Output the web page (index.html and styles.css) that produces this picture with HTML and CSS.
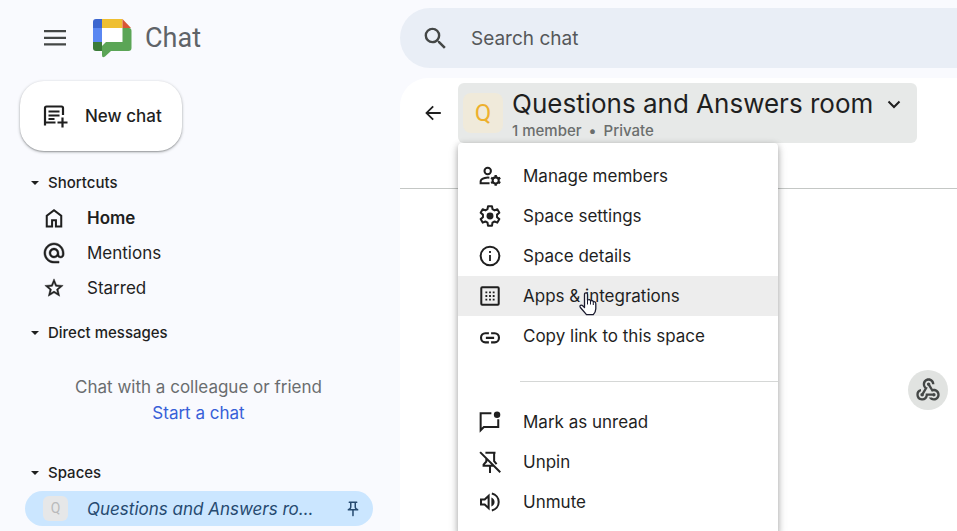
FILE: index.html
```html
<!DOCTYPE html>
<html lang="en">
<head>
<meta charset="utf-8">
<meta name="viewport" content="width=device-width, initial-scale=1">
<title>Chat</title>
<link rel="stylesheet" href="styles.css">
</head>
<body>
<div class="app">
  <aside class="sidebar">
    <header class="brand">
      <button class="icon-button" type="button" aria-label="Main menu">
        <svg class="icon icon-large" viewBox="0 0 24 24"><path d="M1 4h22v2.300H1zM1 10.800h22v2.300H1zM1 17.300h22v2.300H1z"/></svg>
      </button>
      <svg class="logo" viewBox="0 0 39 39" aria-hidden="true">
        <path fill="#fff" d="M9 9h21v14H9z"/>
        <path fill="#3c66cf" d="M3 0h6v9H0V3q0-3 3-3z"/>
        <path fill="#efbf31" d="M9 0h20.500v9H9z"/>
        <path fill="#d85636" d="M29.500 0l8.500 9h-8.500z"/>
        <path fill="#5a87f2" d="M0 9h9v14H0z"/>
        <path fill="#3b7b38" d="M0 23h9v9H3q-3 0-3-3z"/>
        <path fill="#5ba556" d="M29.500 9H36q2.500 0 2.500 3v17q0 3-3 3H18l-6 5.500q-3 2-3-1.500v-9l4-4h16.500z"/>
      </svg>
      <span class="brand-name">Chat</span>
    </header>

    <button class="new-chat" type="button">
      <svg class="icon icon-large" viewBox="0 0 24 24"><path fill="none" stroke="currentColor" stroke-width="2.200" d="M2 21.500V4q0-1.500 1.500-1.500h15Q20 2.500 20 4v7M2 18.500h10.500M5.500 7.500h11M5.500 11.500h11M5.500 15h6M19.500 13.500v10M14.500 18.500h10"/></svg>
      <span>New chat</span>
    </button>

    <nav class="nav">
      <button class="section" type="button"><span class="caret"></span>Shortcuts</button>
      <a class="nav-item current" href="#home">
        <svg class="icon" viewBox="0 0 24 24"><path d="M5.200 20.200h3.600v-6.800h6.400v6.800h3.600v-10L12 5l-6.800 5.200zM3 22.400V9.100L12 2.200l9 6.900v13.300h-8v-6.800h-2v6.800z"/></svg>
        <span>Home</span>
      </a>
      <a class="nav-item" href="#mentions">
        <svg class="icon" viewBox="0 0 24 24"><path stroke="currentColor" stroke-width=".5" d="M12 1c-6.100 0-11 4.900-11 11s4.900 11 11 11h5.500v-2H12c-4.900 0-9-4.100-9-9s4.100-9 9-9 9 4.100 9 9v1.500c0 1-.8 2-1.800 2s-1.800-1-1.800-2V12c0-3-2.400-5.400-5.400-5.400S6.600 9 6.600 12s2.400 5.400 5.400 5.400c1.500 0 2.900-.6 3.900-1.600.7 1 2 1.600 3.300 1.600 2.100 0 3.800-1.700 3.800-3.900V12c0-6.100-4.900-11-11-11zm0 14.400c-1.900 0-3.400-1.500-3.400-3.400s1.500-3.400 3.400-3.400 3.400 1.500 3.400 3.400-1.500 3.400-3.400 3.400z"/></svg>
        <span>Mentions</span>
      </a>
      <a class="nav-item" href="#starred">
        <svg class="icon" viewBox="0 0 24 24"><path stroke="currentColor" stroke-width=".5" d="M22 9.240l-7.190-.62L12 2 9.190 8.630 2 9.240l5.460 4.730L5.820 21 12 17.270 18.180 21l-1.630-7.030L22 9.240zM12 15.400l-3.760 2.270 1-4.280-3.320-2.880 4.380-.38L12 6.100l1.710 4.040 4.380.38-3.320 2.880 1 4.280L12 15.400z"/></svg>
        <span>Starred</span>
      </a>
    </nav>

    <section class="nav">
      <button class="section" type="button"><span class="caret"></span>Direct messages</button>
      <div class="empty">
        <p>Chat with a colleague or friend</p>
        <a href="#start">Start a chat</a>
      </div>
    </section>

    <section class="nav">
      <button class="section" type="button"><span class="caret"></span>Spaces</button>
      <a class="room" href="#room">
        <span class="room-avatar">Q</span>
        <span class="room-name">Questions and Answers room</span>
        <svg class="icon icon-small" viewBox="0 0 24 24"><path d="M14 4v5c0 1.120.37 2.160 1 3H9c.65-.86 1-1.900 1-3V4h4m3-2H7c-.55 0-1 .45-1 1s.45 1 1 1h1v5c0 1.660-1.340 3-3 3v2h5.970v7l1 1 1-1v-7H19v-2c-1.660 0-3-1.340-3-3V4h1c.55 0 1-.45 1-1s-.45-1-1-1z"/></svg>
      </a>
    </section>
  </aside>

  <main class="main">
    <label class="search">
      <svg class="icon search-icon" viewBox="0 0 24 24" aria-hidden="true"><path d="M15.500 14h-.79l-.28-.27A6.471 6.471 0 0 0 16 9.500 6.500 6.500 0 1 0 9.500 16c1.610 0 3.090-.59 4.230-1.570l.27.28v.79l5 4.990L20.490 19l-4.990-5zm-6 0C7.010 14 5 11.990 5 9.500S7.010 5 9.500 5 14 7.010 14 9.500 11.990 14 9.500 14z"/></svg>
      <input type="search" placeholder="Search chat" aria-label="Search chat">
    </label>

    <section class="panel">
      <header class="panel-header">
        <button class="icon-button back" type="button" aria-label="Back">
          <svg class="icon" viewBox="0 0 24 24"><path d="M20.500 11H7.300l5.600-5.590L11.500 4l-8 8 8 8 1.410-1.410L7.300 13h13.200v-2z"/></svg>
        </button>
        <div class="room-head">
          <button class="room-title" type="button" aria-haspopup="menu" aria-expanded="true">
            <span class="avatar">Q</span>
            <span class="title-text">
              <span class="title">Questions and Answers room
                <svg class="chevron" viewBox="0 0 14 9"><path fill="none" stroke="currentColor" stroke-width="2" d="M1.500 1.500L7 7l5.500-5.500"/></svg>
              </span>
              <span class="meta"><span>1 member</span><span>•</span><span>Private</span></span>
            </span>
          </button>

          <div class="menu" role="menu">
            <button class="menu-item" type="button" role="menuitem">
              <svg class="icon" viewBox="0 0 24 24"><g fill="none" stroke="currentColor" stroke-width="2.200"><circle cx="9.500" cy="6.500" r="3.500"/><path d="M11.500 20H1.800v-2.200q0-2.600 4.500-3.700 2.200-.5 5-.3"/><circle cx="18.200" cy="16.800" r="3.300"/></g><path fill="none" stroke="currentColor" stroke-width="2.600" d="M18.200 11v2.500M18.200 20.100v2.500M13.200 13.900l2.100 1.200M21.100 18.500l2.100 1.200M13.200 19.700l2.100-1.200M21.100 15.100l2.100-1.200"/></svg>
              <span>Manage members</span>
            </button>
            <button class="menu-item" type="button" role="menuitem">
              <svg class="icon" viewBox="0 0 24 24"><path fill="none" stroke="currentColor" stroke-width="2.200" stroke-linejoin="round" d="M9.800 1.400h4.400l.5 3.200 2.300 1.300 3-1.200 2.200 3.800-2.500 2v2.900l2.500 2-2.200 3.800-3-1.200-2.300 1.300-.5 3.300H9.800l-.5-3.300L7 18l-3 1.200-2.200-3.800 2.500-2v-2.900l-2.500-2L4 4.700l3 1.200 2.300-1.300z"/><circle cx="12" cy="12" r="3.800"/></svg>
              <span>Space settings</span>
            </button>
            <button class="menu-item" type="button" role="menuitem">
              <svg class="icon" viewBox="0 0 24 24"><circle cx="12" cy="12" r="10.200" fill="none" stroke="currentColor" stroke-width="2.200"/><path d="M11 6.500h2v2.200h-2zM11 10.800h2v6.700h-2z"/></svg>
              <span>Space details</span>
            </button>
            <button class="menu-item active" type="button" role="menuitem">
              <svg class="icon" viewBox="0 0 24 24"><rect x="2.500" y="2.500" width="19" height="19" rx="1" fill="none" stroke="currentColor" stroke-width="2.200"/><path d="M7 7h2v2H7zM11 7h2v2h-2zM15 7h2v2h-2zM7 11h2v2H7zM11 11h2v2h-2zM15 11h2v2h-2zM7 15h2v2H7zM11 15h2v2h-2zM15 15h2v2h-2z"/></svg>
              <span>Apps &amp; integrations</span>
              <svg class="pointer" viewBox="0 0 18 24" aria-hidden="true"><path fill="#fff" stroke="#1b1b2f" stroke-width="1.300" stroke-linejoin="round" d="M5.500 13V2.500q0-1.700 1.500-1.700t1.500 1.700V8q2.500-1 3 .8 2.300-.8 2.800.9 2.500-.4 2.500 2v5q0 3-2.500 6H7.500L1.400 15.500q-1-1.500.2-2.200 1.200-.6 2.400.7l1.500 1.500z"/><path fill="none" stroke="#1b1b2f" d="M8.500 8v4.500M11.500 9v3.500M14.300 10v3"/></svg>
            </button>
            <button class="menu-item" type="button" role="menuitem">
              <svg class="icon" viewBox="0 0 24 24"><path fill="none" stroke="currentColor" stroke-width="2.300" d="M10.800 9H6.900C4.200 9 2.200 11.100 2.200 14s2 5 4.700 5h3.900M13.200 9h3.900c2.700 0 4.700 2.100 4.700 5s-2 5-4.700 5h-3.900M7.500 14h9"/></svg>
              <span>Copy link to this space</span>
            </button>
            <hr class="menu-divider">
            <button class="menu-item" type="button" role="menuitem">
              <svg class="icon" viewBox="0 0 24 24"><path fill="none" stroke="currentColor" stroke-width="2.200" d="M13.500 2.500H1.800V21L5.300 17.500H21V9"/><circle cx="19.700" cy="4" r="3.500"/></svg>
              <span>Mark as unread</span>
            </button>
            <button class="menu-item" type="button" role="menuitem">
              <svg class="icon" viewBox="0 0 24 24"><path fill="none" stroke="currentColor" stroke-width="2.200" d="M1.200 1.200l22 22M7 1.800h11M16.500 2v9l2.700 3.300M8 8.500v3L5 14.800V16h10.500M12 16v8"/></svg>
              <span>Unpin</span>
            </button>
            <button class="menu-item" type="button" role="menuitem">
              <svg class="icon" viewBox="0 0 24 24"><path fill="none" stroke="currentColor" stroke-width="2.200" d="M2.200 9.300v5.400h4l4.300 4V5.300l-4.300 4zM14 2.800c4.500 1 7.500 4.700 7.500 9.200s-3 8.200-7.500 9.200"/><path d="M13.500 7.200c2 .8 3.500 2.600 3.500 4.800s-1.500 4-3.500 4.800z"/></svg>
              <span>Unmute</span>
            </button>
          </div>
        </div>
      </header>

      <div class="conversation">
        <button class="webhook" type="button" aria-label="Webhooks">
          <svg viewBox="0 0 24 24"><path d="M10 15h5.880c.27-.31.67-.5 1.120-.5.83 0 1.500.67 1.500 1.500s-.67 1.500-1.500 1.500c-.44 0-.84-.19-1.120-.5H11.900A5 5 0 1 1 6 11.100v2.070c-1.160.41-2 1.530-2 2.830 0 1.650 1.350 3 3 3s3-1.350 3-3v-1zm2.500-11c1.650 0 3 1.350 3 3h2c0-2.760-2.240-5-5-5s-5 2.240-5 5c0 1.430.6 2.710 1.550 3.620l-2.350 3.900c-.68.14-1.200.75-1.200 1.480 0 .83.67 1.500 1.500 1.500s1.500-.67 1.500-1.500c0-.16-.02-.31-.07-.45l3.380-5.630A3.010 3.010 0 0 1 9.500 7c0-1.650 1.350-3 3-3zm4.500 9c-.64 0-1.230.2-1.720.54l-3.050-5.070A1.500 1.500 0 0 1 12.500 5.500c.83 0 1.500.67 1.500 1.500 0 .15-.02.29-.06.43l2.190 3.650c.28-.05.57-.08.87-.08 2.760 0 5 2.240 5 5s-2.240 5-5 5a5 5 0 0 1-4.330-2.500h2.670c.48.32 1.050.5 1.660.5 1.650 0 3-1.350 3-3s-1.350-3-3-3z"/></svg>
        </button>
      </div>
    </section>
  </main>
</div>
</body>
</html>
```
FILE: styles.css
```css
* {
  box-sizing: border-box;
}

body {
  margin: 0;
  background: #f9fafe;
  color: #1f1f1f;
  font: 17px/24px Inter, Roboto, "Liberation Sans", sans-serif;
  overflow: hidden;
}

button {
  border: 0;
  padding: 0;
  background: none;
  color: inherit;
  font: inherit;
  text-align: left;
}

a {
  color: inherit;
  text-decoration: none;
}

p {
  margin: 0;
}

.icon {
  width: 22px;
  height: 22px;
  flex: none;
  fill: currentColor;
  overflow: visible;
}

.icon-large {
  width: 24px;
  height: 24px;
}

.icon-small {
  width: 18px;
  height: 18px;
}

.icon-button {
  display: flex;
}

.app {
  display: grid;
  grid-template-columns: 400px 1fr;
  min-height: 100vh;
}

/* Sidebar */

.brand {
  display: flex;
  align-items: center;
  height: 76px;
  padding-left: 43px;
  color: #444746;
}

.logo {
  width: 39px;
  height: 39px;
  margin: 0 13px 0 26px;
}

.brand-name {
  color: #5f6368;
  font: 27px/36px Roboto, sans-serif;
}

.new-chat {
  display: flex;
  align-items: center;
  gap: 18px;
  height: 70px;
  margin: 5px 20px 20px;
  padding: 0 20px 0 23px;
  border-radius: 24px;
  background: #fff;
  box-shadow: 0 1px 3px rgba(60, 64, 67, .45), 0 1px 1px rgba(60, 64, 67, .2);
  font-weight: 500;
}

.nav {
  display: flex;
  flex-direction: column;
  margin-bottom: 16px;
}

.section {
  display: flex;
  align-items: center;
  gap: 9px;
  height: 24px;
  margin-bottom: 5px;
  padding-left: 31px;
  font-size: 15px;
  font-weight: 500;
}

.caret {
  border: 4px solid transparent;
  border-top-color: currentColor;
  border-bottom: 0;
}

.nav-item {
  display: flex;
  align-items: center;
  gap: 22px;
  height: 35px;
  padding-left: 43px;
}

.current {
  font-weight: 600;
}

.empty {
  margin: 24px 3px 19px 0;
  color: #6a6d6f;
  line-height: 26px;
  text-align: center;
}

.empty a {
  color: #3760d8;
}

.room {
  display: flex;
  align-items: center;
  height: 35px;
  margin: 1px 27px 0 25px;
  padding: 0 11px 0 18px;
  border-radius: 18px;
  background: #cbe6ff;
  color: #264a70;
}

.room-avatar {
  width: 25px;
  height: 25px;
  margin-right: 19px;
  border-radius: 6px;
  background: #e6e7e8;
  color: #b9babb;
  font: 14px/25px Roboto, sans-serif;
  text-align: center;
}

.room-name {
  flex: 1;
  min-width: 0;
  margin-right: 24px;
  overflow: hidden;
  font-style: italic;
  text-overflow: ellipsis;
  white-space: nowrap;
}

/* Main area */

.main {
  display: flex;
  flex-direction: column;
  gap: 10px;
  min-width: 0;
  padding-top: 8px;
}

.search {
  display: flex;
  align-items: center;
  gap: 21px;
  height: 60px;
  padding-left: 21px;
  border-radius: 30px 0 0 30px;
  background: #e9eef6;
  color: #444746;
}

.search-icon {
  width: 29px;
  height: 29px;
}

.search input {
  flex: 1;
  min-width: 0;
  padding: 2px 0 0;
  border: 0;
  outline: 0;
  background: none;
  color: inherit;
  font: inherit;
  font-size: 19px;
}

.search input::placeholder {
  color: #55585a;
  opacity: 1;
}

.panel {
  display: flex;
  flex: 1;
  flex-direction: column;
  border-radius: 28px 0 0 0;
  background: #fff;
}

.panel-header {
  display: flex;
  align-items: flex-start;
  gap: 14px;
  padding: 5px 40px 45px 22px;
  border-bottom: 1px solid #c4c7c5;
}

.back {
  margin-top: 19px;
}

.room-head {
  position: relative;
  flex: 1;
  min-width: 0;
}

.room-title {
  display: flex;
  align-items: center;
  gap: 9px;
  width: 100%;
  height: 60px;
  padding: 0 5px;
  border-radius: 6px;
  background: #e7e9e8;
  white-space: nowrap;
}

.avatar {
  width: 40px;
  height: 40px;
  border-radius: 8px;
  background: #f0eada;
  color: #edb02d;
  font: 24px/40px Roboto, sans-serif;
  text-align: center;
}

.title-text {
  display: flex;
  flex-direction: column;
  padding-top: 2px;
}

.title {
  display: flex;
  align-items: center;
  gap: 14px;
  font-size: 26px;
  line-height: 34px;
}

.chevron {
  width: 14px;
  height: 9px;
}

.meta {
  display: flex;
  gap: 7px;
  color: #6b6e6d;
  font-size: 15px;
  font-weight: 500;
  line-height: 20px;
}

.menu {
  position: absolute;
  top: 100%;
  left: 0;
  width: 320px;
  padding: 13px 0;
  border-radius: 4px;
  background: #fff;
  box-shadow: 0 2px 6px rgba(0, 0, 0, .3), 0 4px 12px rgba(0, 0, 0, .12);
}

.menu-item {
  position: relative;
  display: flex;
  align-items: center;
  gap: 22px;
  width: 100%;
  height: 40px;
  padding-left: 21px;
}

.menu-item.active {
  background: #ededed;
}

.menu-divider {
  height: 1px;
  margin: 25px 0 20px 62px;
  border: 0;
  background: #d5d7d6;
}

.pointer {
  position: absolute;
  top: 16px;
  left: 121px;
  width: 18px;
  height: 24px;
}

.conversation {
  display: flex;
  flex: 1;
  justify-content: flex-end;
  padding: 181px 9px 0;
}

.webhook {
  display: flex;
  align-items: center;
  justify-content: center;
  width: 40px;
  height: 40px;
  border-radius: 50%;
  background: #e1e3e1;
}

.webhook svg {
  width: 28px;
  height: 28px;
  fill: #444746;
}
```
